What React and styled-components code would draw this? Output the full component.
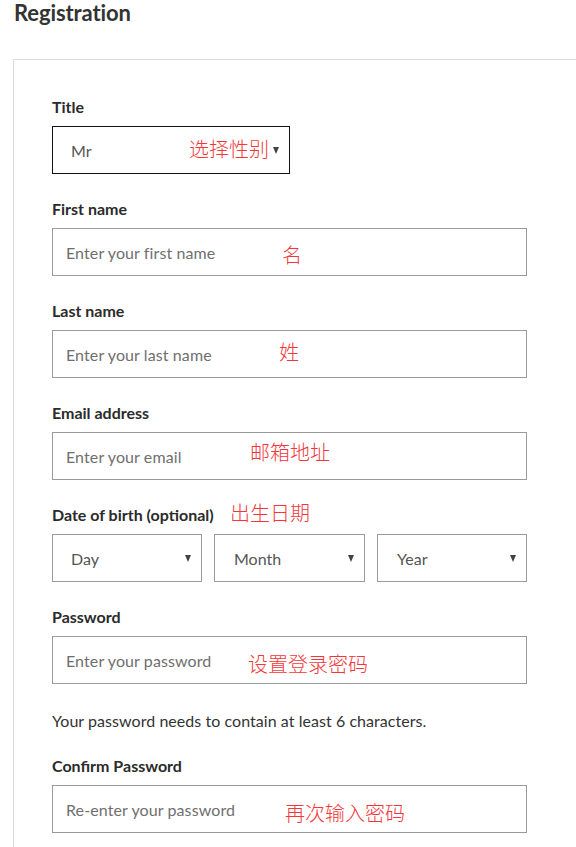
import React from "react";
import styled, { createGlobalStyle } from "styled-components";

const Global = createGlobalStyle`
  html, body { margin: 0; padding: 0; background: #fff; }
  body { font-family: Lato, "Noto Sans", sans-serif; color: #333; }
  * { box-sizing: border-box; }
`;

const Page = styled.div`
  width: 576px;
  height: 847px;
  overflow: hidden;
  display: flex;
  flex-direction: column;
`;

const Heading = styled.h1`
  margin: 0;
  padding-left: 14px;
  font-size: 22px;
  line-height: 26px;
  font-weight: 700;
  color: #333;
  letter-spacing: -0.1px;
`;

const Panel = styled.div`
  flex: 1;
  margin: 33px 0 0 13px;
  border-left: 1px solid #dcdcdc;
  border-top: 1px solid #dcdcdc;
  padding: 37px 0 0 38px;
`;

const Form = styled.form`
  width: 475px;
  display: flex;
  flex-direction: column;
  gap: 25px;
`;

const Field = styled.div`
  position: relative;
  display: flex;
  flex-direction: column;
  gap: 9px;
`;

const Label = styled.label`
  font-size: 16px;
  line-height: 20px;
  font-weight: 700;
  color: #2b2b2b;
`;

const Input = styled.input`
  width: 100%;
  height: 48px;
  border: 1px solid #9a9a9a;
  border-radius: 0;
  padding: 0 13px;
  font-family: Lato, sans-serif;
  font-size: 16px;
  letter-spacing: 0.1px;
  color: #333;
  outline: none;
  &::placeholder { color: #6f6f6f; }
`;

const SelectBox = styled.div`
  width: ${(p) => p.$width || "100%"};
  height: 48px;
  border: 1px solid ${(p) => (p.$active ? "#111" : "#9a9a9a")};
  display: flex;
  align-items: center;
  padding: 0 10px 0 ${(p) => p.$pad || 18}px;
  font-size: 16px;
  color: #555;
`;

const SelectValue = styled.span`
  flex: 1;
`;

const Arrow = styled.span`
  width: 0;
  height: 0;
  border-left: 3.5px solid transparent;
  border-right: 3.5px solid transparent;
  border-top: 7px solid #444;
  margin-top: 1px;
`;

const DateRow = styled.div`
  display: grid;
  grid-template-columns: 150px 151px 150px;
  gap: 12px;
`;

const Help = styled.p`
  margin: 18px 0 0;
  font-size: 16px;
  line-height: 20px;
  letter-spacing: 0.05px;
  color: #333;
`;

const Note = styled.span`
  position: absolute;
  left: ${(p) => p.$x}px;
  top: ${(p) => p.$y}px;
  font-family: "Noto Sans CJK SC", sans-serif;
  font-weight: 300;
  font-size: 20px;
  line-height: 20px;
  color: #f2373b;
  white-space: nowrap;
  pointer-events: none;
`;

function Select({ value, width, active, pad }) {
  return (
    <SelectBox $width={width} $active={active} $pad={pad}>
      <SelectValue>{value}</SelectValue>
      <Arrow />
    </SelectBox>
  );
}

export default function App() {
  return (
    <Page>
      <Global />
      <Heading>Registration</Heading>
      <Panel>
        <Form onSubmit={(e) => e.preventDefault()}>
          <Field>
            <Label>Title</Label>
            <Select value="Mr" width="238px" active />
            <Note $x={137} $y={42}>选择性别</Note>
          </Field>
          <Field>
            <Label>First name</Label>
            <Input placeholder="Enter your first name" />
            <Note $x={230} $y={46}>名</Note>
          </Field>
          <Field>
            <Label>Last name</Label>
            <Input placeholder="Enter your last name" />
            <Note $x={227} $y={41}>姓</Note>
          </Field>
          <Field>
            <Label>Email address</Label>
            <Input placeholder="Enter your email" />
            <Note $x={198} $y={39}>邮箱地址</Note>
          </Field>
          <Field>
            <Label>Date of birth (optional)</Label>
            <DateRow>
              <Select value="Day" pad={18} />
              <Select value="Month" pad={19} />
              <Select value="Year" pad={19} />
            </DateRow>
            <Note $x={178} $y={-2}>出生日期</Note>
          </Field>
          <Field>
            <Label>Password</Label>
            <Input type="password" placeholder="Enter your password" />
            <Note $x={196} $y={47}>设置登录密码</Note>
            <Help>Your password needs to contain at least 6 characters.</Help>
          </Field>
          <Field>
            <Label>Confirm Password</Label>
            <Input type="password" placeholder="Re-enter your password" />
            <Note $x={233} $y={47}>再次输入密码</Note>
          </Field>
        </Form>
      </Panel>
    </Page>
  );
}
